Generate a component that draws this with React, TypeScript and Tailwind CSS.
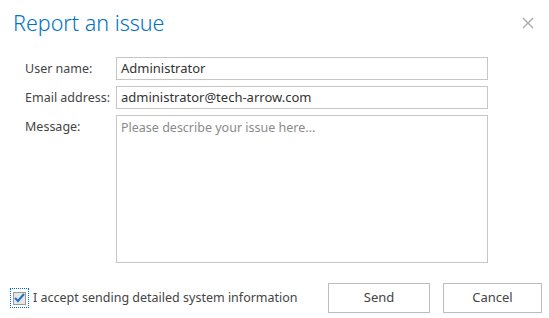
export default function App() {
  return (
    <div
      className="relative w-[549px] h-[318px] bg-white overflow-hidden"
      style={{ fontFamily: '"Noto Sans", "Open Sans", sans-serif' }}
    >
      <div className="flex items-start justify-between pl-[13px] pr-[10px] pt-[8px]">
        <h1 className="text-[21.5px] leading-[30px] font-light text-[#0072c6]">Report an issue</h1>
        <button className="mt-[4px] w-[22px] h-[22px] flex items-center justify-center text-[#a8a8a8]">
          <svg width="12" height="12" viewBox="0 0 12 12" stroke="currentColor" strokeWidth="1.3">
            <path d="M1 1 L11 11 M11 1 L1 11" />
          </svg>
        </button>
      </div>

      <div className="mt-[19px] ml-[25px] grid grid-cols-[91px_372px] gap-y-[6px] text-[12.5px] text-[#444]">
        <label className="leading-[23px]">User name:</label>
        <div className="h-[23px] border border-[#c6c6c6] px-[4px] leading-[21px] text-[13px] text-[#333]">
          Administrator
        </div>
        <label className="leading-[23px]">Email address:</label>
        <div className="h-[23px] border border-[#c6c6c6] px-[4px] leading-[21px] text-[13px] text-[#333]">
          administrator@tech-arrow.com
        </div>
        <label className="leading-[23px]">Message:</label>
        <div className="h-[148px] border border-[#c6c6c6] px-[4px] pt-[1px] leading-[21px] text-[12.5px] text-[#8a8a8a]">
          Please describe your issue here...
        </div>
      </div>

      <div className="mt-[20px] flex items-center pl-[10px] pr-[7px]">
        <div className="w-[19px] h-[20px] border border-dotted border-[#0066cc] flex items-center justify-center">
          <div className="w-[13px] h-[13px] border border-[#9a9a9a] bg-[#e6e6e6] flex items-center justify-center">
            <svg width="11" height="10" viewBox="0 0 11 10" fill="none" stroke="#1a73c9" strokeWidth="2">
              <path d="M1 5 L4 8 L10 1" />
            </svg>
          </div>
        </div>
        <span className="ml-[4px] text-[12.5px] text-[#444]">I accept sending detailed system information</span>
        <div className="ml-auto flex gap-[13px]">
          <button className="w-[102px] h-[30px] border border-[#bdbdbd] bg-white text-[13px] text-[#444]">Send</button>
          <button className="w-[99px] h-[30px] border border-[#bdbdbd] bg-white text-[13px] text-[#444]">Cancel</button>
        </div>
      </div>
    </div>
  );
}
